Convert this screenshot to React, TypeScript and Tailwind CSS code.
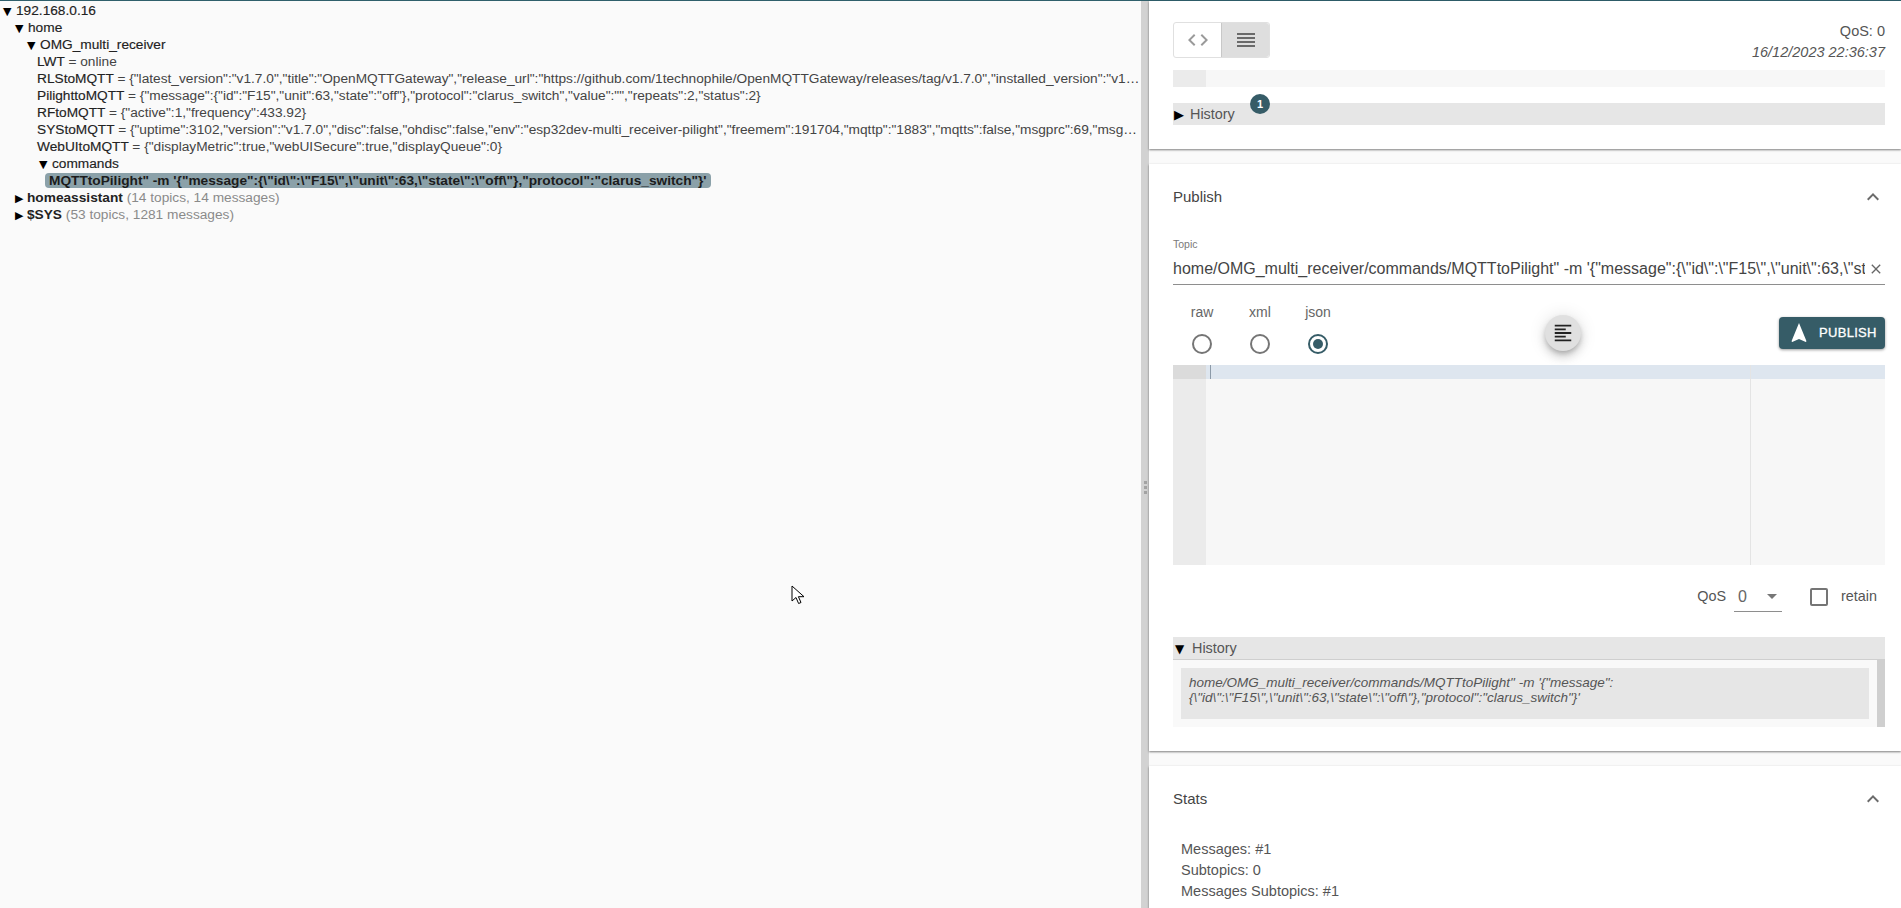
const font = { fontFamily: "'Liberation Sans', Arial, sans-serif" };

const P = ({ d, size = 24, className = "" }: { d: string; size?: number; className?: string }) => (
  <svg width={size} height={size} viewBox="0 0 24 24" className={className} fill="currentColor">
    <path d={d} />
  </svg>
);

const rls = `{"latest_version":"v1.7.0","title":"OpenMQTTGateway","release_url":"https://github.com/1technophile/OpenMQTTGateway/releases/tag/v1.7.0","installed_version":"v1.7.0","entity_picture":"https://github.com/1technophile/OpenMQTTGateway/raw/development/docs/img/logo.png"}`;
const pil = `{"message":{"id":"F15","unit":63,"state":"off"},"protocol":"clarus_switch","value":"","repeats":2,"status":2}`;
const sys = `{"uptime":3102,"version":"v1.7.0","disc":false,"ohdisc":false,"env":"esp32dev-multi_receiver-pilight","freemem":191704,"mqttp":"1883","mqtts":false,"msgprc":69,"msgblck":0,"msgrcv":70,"maxrcv":1}`;
const cmd = `MQTTtoPilight" -m '{"message":{\\"id\\":\\"F15\\",\\"unit\\":63,\\"state\\":\\"off\\"},"protocol":"clarus_switch"}'`;

function Arrow({ open }: { open: boolean }) {
  return (
    <span className={`inline-block w-[10px] text-[11px] leading-none text-black ${open ? "mr-[3px]" : "mr-[2px]"}`} style={{ fontFamily: "'DejaVu Sans', sans-serif" }}>
      {open ? "▼" : "▶"}
    </span>
  );
}

function Row({ pad, children }: { pad: string; children: React.ReactNode }) {
  return <div className={`h-[17px] leading-[17px] whitespace-nowrap overflow-hidden text-ellipsis text-[13.7px] text-[#333] ${pad}`}>{children}</div>;
}

function Key({ children }: { children: React.ReactNode }) {
  return <span className="text-[#222] [-webkit-text-stroke:0.15px_#222]">{children}</span>;
}

function Leaf({ k, v }: { k: string; v: string }) {
  return (
    <Row pad="pl-[37px] pr-[1px]">
      <Key>{k}</Key>
      <span className="text-[#444]"> = {v}</span>
    </Row>
  );
}

function Card({ children, className = "" }: { children: React.ReactNode; className?: string }) {
  return <div className={`bg-white px-6 shadow-[0_1px_2px_rgba(0,0,0,0.5)] ${className}`}>{children}</div>;
}

function Radio({ label, on }: { label: string; on?: boolean }) {
  return (
    <div className="w-[58px] flex flex-col items-center">
      <span className="text-[14px] leading-[16px] text-[#666]">{label}</span>
      <span className={`mt-[14px] w-5 h-5 rounded-full border-2 flex items-center justify-center ${on ? "border-[#365c67]" : "border-[#757575]"}`}>
        {on && <span className="w-[10px] h-[10px] rounded-full bg-[#365c67]" />}
      </span>
    </div>
  );
}

export default function App() {
  return (
    <div style={font} className="relative h-[908px] w-[1901px] overflow-hidden flex flex-col bg-[#fafafa]">
      <div className="h-px bg-[#2f5f6b] shrink-0" />
      <div className="flex flex-1 min-h-0">
        <div className="w-[1141px] shrink-0 bg-[#fafafa] pt-px">
          <Row pad="pl-[3px]"><Arrow open /><Key>192.168.0.16</Key></Row>
          <Row pad="pl-[15px]"><Arrow open /><Key>home</Key></Row>
          <Row pad="pl-[27px]"><Arrow open /><Key>OMG_multi_receiver</Key></Row>
          <Leaf k="LWT" v="online" />
          <Leaf k="RLStoMQTT" v={rls} />
          <Leaf k="PilighttoMQTT" v={pil} />
          <Leaf k="RFtoMQTT" v={`{"active":1,"frequency":433.92}`} />
          <Leaf k="SYStoMQTT" v={sys} />
          <Leaf k="WebUItoMQTT" v={`{"displayMetric":true,"webUISecure":true,"displayQueue":0}`} />
          <Row pad="pl-[39px]"><Arrow open /><Key>commands</Key></Row>
          <div className="h-[17px] pl-[45px] flex items-center">
            <span className="h-[15px] leading-[15px] px-[4px] rounded-[4px] bg-[#8ba1a9] text-[13.7px] font-bold text-[#1c1c1c] whitespace-nowrap">{cmd}</span>
          </div>
          <Row pad="pl-[15px]"><Arrow open={false} /><span className="font-bold text-[#222]">homeassistant</span> <span className="text-[#8a8a8a]">(14 topics, 14 messages)</span></Row>
          <Row pad="pl-[15px]"><Arrow open={false} /><span className="font-bold text-[#222]">$SYS</span> <span className="text-[#8a8a8a]">(53 topics, 1281 messages)</span></Row>
        </div>

        <div className="w-2 shrink-0 bg-[#d2d2d2] flex flex-col items-center justify-center gap-[2px] pt-[66px]">
          <span className="w-[3px] h-[3px] bg-[#a3a3a3]" />
          <span className="w-[3px] h-[3px] bg-[#a3a3a3]" />
          <span className="w-[3px] h-[3px] bg-[#a3a3a3]" />
        </div>

        <div className="flex-1 min-w-0 flex flex-col text-[#444]">
          {/* Value panel */}
          <Card className="h-[148px] shrink-0 pr-4 pt-[21px]">
            <div className="flex justify-between h-[36px]">
              <div className="flex h-[36px] w-[97px] rounded-[3px] border border-[#e0e0e0]">
                <div className="w-[47px] flex items-center justify-center text-[#9a9a9a]">
                  <P size={24} d="M9.4 16.6L4.8 12l4.6-4.6L8 6l-6 6 6 6 1.4-1.4zm5.2 0l4.6-4.6-4.6-4.6L16 6l6 6-6 6-1.4-1.4z" />
                </div>
                <div className="flex-1 flex items-center justify-center bg-[#dedede] border-l border-[#c8c8c8] text-[#6a6a6a] rounded-r-[3px]">
                  <P size={24} d="M3 15h18v-2H3v2zm0 4h18v-2H3v2zm0-8h18V9H3v2zm0-6v2h18V5H3z" />
                </div>
              </div>
              <div className="text-right text-[14.5px] leading-[21px] text-[#555] -mt-[1px]">
                <div>QoS: 0</div>
                <div className="italic">16/12/2023 22:36:37</div>
              </div>
            </div>
            <div className="mt-[12px] h-[17px] flex bg-[#f7f7f7]">
              <div className="w-[33px] bg-[#ebebeb]" />
            </div>
            <div className="relative mt-[16px] h-[22px] pt-px bg-[#e6e6e6] flex items-center text-[14.4px] text-[#555]">
              <span className="inline-block w-[17px] pl-[1px] text-[13px] text-black leading-none" style={{ fontFamily: "'DejaVu Sans', sans-serif" }}>▶</span>History
              <span className="absolute left-[77px] -top-[9px] w-5 h-5 rounded-full bg-[#365c67] text-white text-[11px] font-bold flex items-center justify-center">1</span>
            </div>
          </Card>

          <div className="h-[15px] shrink-0" />

          {/* Publish panel */}
          <Card className="h-[587px] shrink-0 pr-4">
            <div className="h-[66px] flex items-center justify-between text-[15px] text-[#444]">
              <span>Publish</span>
              <P size={24} d="M12 8l-6 6 1.41 1.41L12 10.83l4.59 4.58L18 14z" className="text-[#6b6b6b]" />
            </div>
            <div className="text-[10.5px] leading-[12px] text-[#7a7a7a] mt-[8px]">Topic</div>
            <div className="relative h-[32px] mt-[3px] border-b border-[#8e8e8e] flex items-center pr-[20px] text-[16px] text-[#444]">
              <span className="flex-1 overflow-hidden whitespace-nowrap">home/OMG_multi_receiver/commands/MQTTtoPilight" -m '{`{"message":{\\"id\\":\\"F15\\",\\"unit\\":63,\\"state\\":\\"off\\"},"protocol":"clarus_switch"}`}'</span>
              <P size={16} d="M19 6.41L17.59 5 12 10.59 6.41 5 5 6.41 10.59 12 5 17.59 6.41 19 12 13.41 17.59 19 19 17.59 13.41 12z" className="absolute right-[1px] text-[#666]" />
            </div>

            <div className="h-[80px] flex items-start justify-between">
              <div className="flex pt-[19px]">
                <Radio label="raw" />
                <Radio label="xml" />
                <Radio label="json" on />
              </div>
              <div className="flex items-start">
                <div className="mt-[30px] w-9 h-9 rounded-full bg-[#e0e0e0] shadow-[0_3px_5px_-1px_rgba(0,0,0,0.2),0_6px_10px_0_rgba(0,0,0,0.14),0_1px_18px_0_rgba(0,0,0,0.12)] flex items-center justify-center text-[#222] mr-[198px]">
                  <P size={22} d="M15 15H3v2h12v-2zm0-8H3v2h12V7zM3 13h18v-2H3v2zm0 8h18v-2H3v2zM3 3v2h18V3H3z" />
                </div>
                <div className="mt-[32px] w-[106px] h-8 rounded-[4px] bg-[#365c67] shadow-[0_1px_3px_rgba(0,0,0,0.4)] text-white flex items-center text-[13px] tracking-[0.3px] [-webkit-text-stroke:0.3px_#fff]">
                  <P size={24} d="M12 2L4.5 20.29l.71.71L12 18l6.79 3 .71-.71z" className="ml-[8px] mr-[8px]" />
                  PUBLISH
                </div>
              </div>
            </div>

            {/* Editor */}
            <div className="relative h-[200px] bg-[#f7f7f7] flex">
              <div className="w-[33px] bg-[#ebebeb]">
                <div className="h-[14px] bg-[#dbdbdb]" />
              </div>
              <div className="flex-1 relative">
                <div className="h-[14px] bg-[#dee6ef]" />
                <div className="absolute left-[4px] top-0 w-px h-[14px] bg-[#8c9aa8]" />
                <div className="absolute right-[134px] top-0 bottom-0 w-px bg-[#e4e4e4]" />
              </div>
            </div>

            <div className="h-[72px] flex items-center justify-end pb-[8px] text-[14.4px] text-[#555]">
              <span className="mr-[8px]">QoS</span>
              <div className="relative w-[48px] h-[30px] border-b border-[#8e8e8e] flex items-center text-[16px] text-[#666] pl-[4px] mr-[28px]">
                0
                <P size={24} d="M7 10l5 5 5-5z" className="absolute right-[-2px] top-[2px] text-[#777]" />
              </div>
              <span className="w-[18px] h-[18px] rounded-[2px] border-2 border-[#757575] mr-[13px]" />
              <span className="mr-[8px]">retain</span>
            </div>

            <div className="h-[23px] pt-px bg-[#e6e6e6] border-b border-[#cfcfcf] flex items-center text-[14.4px] text-[#555]">
              <span className="inline-block w-[19px] pl-[2px] text-[12px] text-black leading-none" style={{ fontFamily: "'DejaVu Sans', sans-serif" }}>▼</span>History
            </div>
            <div className="h-[67px] bg-[#f9f9f9] pt-[8px] pl-[8px] pr-[16px] relative">
              <div className="h-[51px] bg-[#e6e6e6] px-[8px] pt-[7px] italic text-[13.5px] leading-[15px] text-[#555]">
                home/OMG_multi_receiver/commands/MQTTtoPilight" -m '{`{"message":`}<br />
                {`{\\"id\\":\\"F15\\",\\"unit\\":63,\\"state\\":\\"off\\"},"protocol":"clarus_switch"}`}'
              </div>
              <div className="absolute right-0 top-0 bottom-0 w-2 bg-[#cfcfcf]" />
            </div>
          </Card>

          <div className="h-[15px] shrink-0" />

          {/* Stats panel */}
          <Card className="flex-1 pr-4">
            <div className="h-[66px] flex items-center justify-between text-[15px] text-[#444]">
              <span>Stats</span>
              <P size={24} d="M12 8l-6 6 1.41 1.41L12 10.83l4.59 4.58L18 14z" className="text-[#6b6b6b]" />
            </div>
            <div className="pl-[8px] pt-[7px] text-[14.5px] leading-[21px] text-[#555]">
              <div>Messages: #1</div>
              <div>Subtopics: 0</div>
              <div>Messages Subtopics: #1</div>
            </div>
          </Card>
        </div>
      </div>

      {/* mouse pointer */}
      <svg width="14" height="20" viewBox="0 0 14 20" className="absolute left-[791px] top-[585px]">
        <path d="M1 1v15l4-3.5 2.6 6 2.4-1-2.6-5.8H13z" fill="#fff" stroke="#000" strokeWidth="1" />
      </svg>
    </div>
  );
}
